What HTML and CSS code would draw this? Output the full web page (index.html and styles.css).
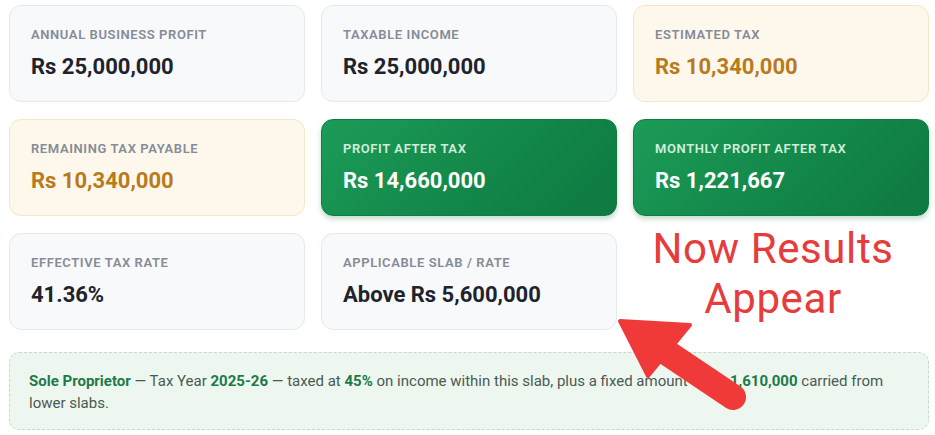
FILE: index.html
```html
<!DOCTYPE html>
<html>
<head>
<meta charset="utf-8">
<link rel="stylesheet" href="styles.css">
</head>
<body>
<div class="page">
  <div class="grid">
    <div class="card neutral"><div class="label">Annual Business Profit</div><div class="value">Rs 25,000,000</div></div>
    <div class="card neutral"><div class="label">Taxable Income</div><div class="value">Rs 25,000,000</div></div>
    <div class="card warn"><div class="label">Estimated Tax</div><div class="value">Rs 10,340,000</div></div>
    <div class="card warn"><div class="label">Remaining Tax Payable</div><div class="value">Rs 10,340,000</div></div>
    <div class="card good"><div class="label">Profit After Tax</div><div class="value">Rs 14,660,000</div></div>
    <div class="card good"><div class="label">Monthly Profit After Tax</div><div class="value">Rs 1,221,667</div></div>
    <div class="card neutral"><div class="label">Effective Tax Rate</div><div class="value">41.36%</div></div>
    <div class="card neutral"><div class="label">Applicable Slab / Rate</div><div class="value">Above Rs 5,600,000</div></div>
    <div class="callout">Now Results<br>Appear</div>
  </div>
  <div class="note">
    <strong>Sole Proprietor</strong> — Tax Year <strong>2025-26</strong> — taxed at <strong>45%</strong> on income within this slab, plus a fixed amount of <strong>Rs 1,610,000</strong> carried from lower slabs.
  </div>
</div>
<svg class="arrow" width="935" height="435" viewBox="0 0 935 435">
  <line x1="660" y1="348" x2="733" y2="397" stroke="#f03a3a" stroke-width="26" stroke-linecap="round"/>
  <polygon points="620,321 690,325 648,376" fill="#f03a3a" stroke="#f03a3a" stroke-width="4" stroke-linejoin="round"/>
</svg>
</body>
</html>
```
FILE: styles.css
```css
html, body { margin: 0; padding: 0; background: #ffffff; }
body { font-family: Roboto, "Noto Sans", Arial, sans-serif; width: 935px; height: 435px; overflow: hidden; position: relative; }
.page { padding: 5px 6px 0 9px; }
.grid { display: grid; grid-template-columns: repeat(3, 296px); grid-auto-rows: 97px; column-gap: 16px; row-gap: 17px; }
.card { box-sizing: border-box; border-radius: 12px; border: 1px solid #e5e9ee; padding: 20px 21px 0; }
.neutral { background: #f7f9fa; }
.warn { background: #fef8ec; border-color: #f7e6c3; }
.good { background: linear-gradient(135deg, #1c9c57 0%, #128548 60%, #0e7a41 100%); border-color: #0f7c42; box-shadow: 0 3px 5px rgba(15,120,65,0.25); }
.label { font-size: 13px; font-weight: 600; letter-spacing: 0.6px; text-transform: uppercase; color: #858b98; line-height: 17px; }
.value { margin-top: 10px; font-size: 22px; font-weight: 700; color: #1e232c; line-height: 28px; }
.warn .value { color: #b97a1e; }
.good .label { color: #d2eedc; }
.good .value { color: #ffffff; }
.callout { font-size: 42px; line-height: 50px; letter-spacing: 0.6px; color: #e63c3c; text-align: center; padding-right: 16px; margin-top: -9px; }
.note { box-sizing: border-box; margin-top: 22px; height: 78px; width: 920px; background: #edf7f0; border: 1px dashed #c5d9cc; border-radius: 10px; padding: 17px 19px; font-size: 15px; line-height: 22px; color: #4a5a52; }
.note strong { color: #1d7a48; font-weight: 700; }
.arrow { position: absolute; left: 0; top: 0; pointer-events: none; }
```
